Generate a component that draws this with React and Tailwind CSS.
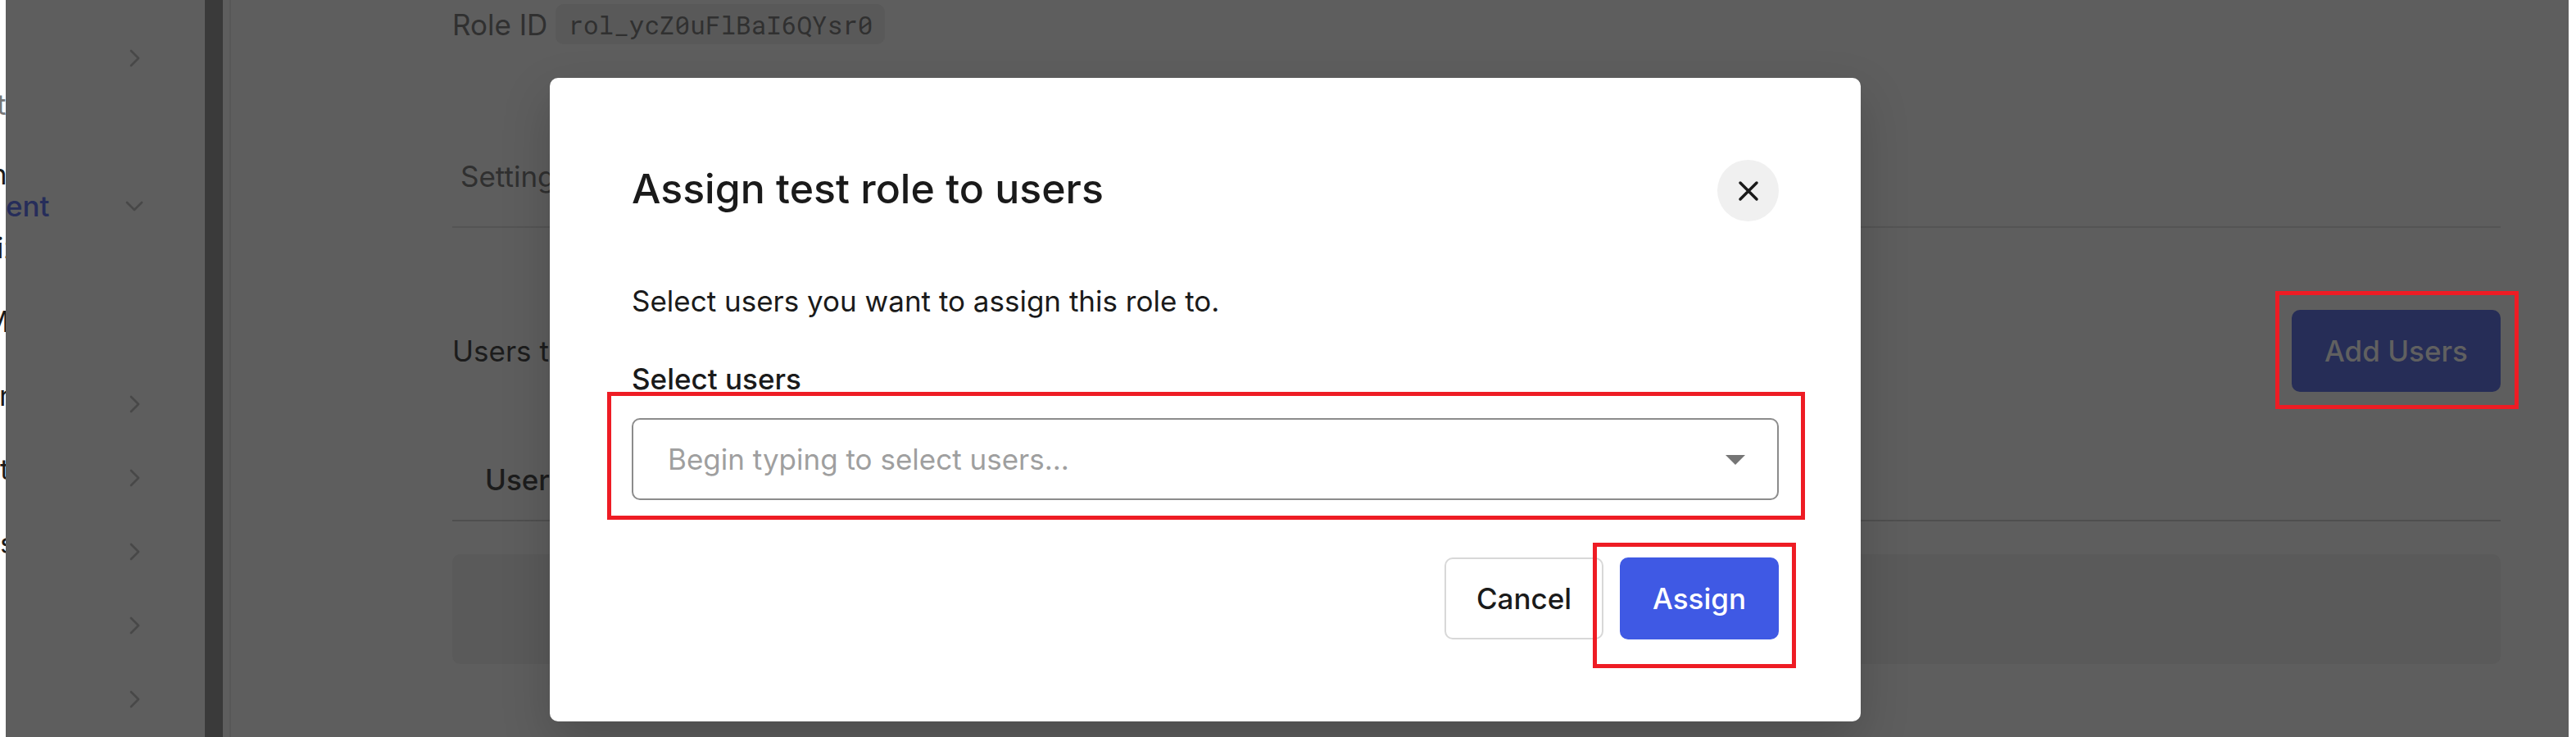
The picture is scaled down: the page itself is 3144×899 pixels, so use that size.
import React, { useState } from 'react';

const edgeRows = [
  { text: 't', className: 'h-20 -ml-1 text-[#777777]' },
  { text: 'n', className: 'h-[90px] -ml-3' },
  { text: 'iz', className: 'h-[90px] -ml-1' },
  { text: 'M', className: 'h-[90px] -ml-5' },
  { text: 'r', className: 'h-[90px] -ml-px' },
  { text: 't', className: 'h-[90px]' },
  { text: 's', className: 'h-[90px]' },
];

function Chevron({ open }) {
  return (
    <svg viewBox="0 0 24 24" className="h-6 w-6" fill="none" stroke="#484848" strokeWidth="2.6" strokeLinecap="round" strokeLinejoin="round">
      {open ? <path d="M3 8l9 9 9-9" /> : <path d="M8 3l9 9-9 9" />}
    </svg>
  );
}

function NavRow({ label, open }) {
  return (
    <button type="button" aria-label={label || 'Expand section'} className="flex h-[90px] w-full shrink-0 items-center justify-between pr-[74px]">
      <span className="font-medium text-[#262d5a]">{label}</span>
      <Chevron open={open} />
    </button>
  );
}

function Highlight({ className }) {
  return <span aria-hidden="true" className={`pointer-events-none absolute border-[5px] border-[#ee1c24] ${className}`} />;
}

function Sidebar() {
  return (
    <nav className="flex w-[243px] shrink-0 flex-col pt-[26px]">
      <NavRow />
      <div className="h-[90px] shrink-0" />
      <NavRow label="ent" open />
      <div className="h-[152px] shrink-0" />
      {[0, 1, 2, 3, 4].map((i) => (
        <NavRow key={i} />
      ))}
    </nav>
  );
}

function RolePage() {
  return (
    <main className="flex min-w-0 flex-1 flex-col pl-[270px] pr-[83px] pt-[5px]">
      <div className="flex h-[49px] shrink-0 items-center gap-2.5 text-[#303030]">
        <span>Role ID</span>
        <code className="flex h-[49px] items-center rounded-[10px] bg-[#595959] px-[15px] font-['Roboto_Mono','DejaVu_Sans_Mono',monospace] text-[31px]">rol_ycZ0uFlBaI6QYsr0</code>
      </div>

      <div className="mt-[99px] flex h-[125px] shrink-0 items-center border-b-2 border-[#545454] px-[10px]">
        <a href="#settings" className="text-[#303030]">Settings</a>
      </div>

      <div className="mt-[100px] flex h-[100px] shrink-0 items-center justify-between">
        <p className="text-[#1c1c1c]">Users t</p>
        <div className="relative">
          <button type="button" className="h-[100px] w-[255px] rounded-[10px] bg-[#262d57] font-medium text-[#606060]">Add Users</button>
          <Highlight className="-bottom-[21px] -left-5 -right-[22px] -top-[23px]" />
        </div>
      </div>

      <table className="mt-[57px] w-full">
        <thead>
          <tr className="h-[100px] border-b-2 border-[#4f4f4f]">
            <th className="px-10 text-left font-medium text-[#1c1c1c]">User</th>
          </tr>
        </thead>
      </table>
      <div className="mt-10 h-[134px] shrink-0 rounded-[10px] bg-[#5a5a5a]" />
    </main>
  );
}

function AssignDialog() {
  const [query, setQuery] = useState('');

  return (
    <div className="absolute inset-0 flex items-start justify-center pr-[202px] pt-[95px]">
      <section role="dialog" aria-labelledby="dialog-title" className="w-full max-w-[1600px] rounded-[10px] bg-white p-[100px] text-[#1a1a1a] shadow-[0_24px_60px_rgba(0,0,0,0.18)]">
        <header className="flex h-[75px] items-start justify-between">
          <h2 id="dialog-title" className="text-[50px] font-medium leading-[70px]">Assign test role to users</h2>
          <button type="button" aria-label="Close" className="grid h-[75px] w-[75px] place-items-center rounded-full bg-[#f0f0f0]">
            <svg viewBox="0 0 24 24" className="h-6 w-6 overflow-visible" fill="none" stroke="#1a1a1a" strokeWidth="3.5" strokeLinecap="round">
              <path d="M2 2l20 20M22 2L2 22" />
            </svg>
          </button>
        </header>

        <p className="mt-[72px] leading-[50px]">Select users you want to assign this role to.</p>

        <label htmlFor="users" className="mt-[45px] block font-medium leading-[50px]">Select users</label>
        <div className="relative mt-[23px]">
          <input
            id="users"
            value={query}
            onChange={(e) => setQuery(e.target.value)}
            placeholder="Begin typing to select users..."
            className="block h-[100px] w-full rounded-[10px] border-2 border-[#8c8c8c] px-[42px] placeholder:text-[#9f9f9f]"
          />
          <svg viewBox="0 0 24 12" className="absolute right-[41px] top-[45px] h-3 w-6" fill="#757575">
            <path d="M0 0h24L12 12z" />
          </svg>
          <Highlight className="-bottom-6 -left-[30px] -right-8 -top-8" />
        </div>

        <footer className="mt-[70px] flex justify-end gap-5">
          <button type="button" className="h-[100px] w-[194px] rounded-[10px] border-2 border-[#d8d8d8] font-medium">Cancel</button>
          <div className="relative">
            <button type="button" className="h-[100px] w-[194px] rounded-[10px] bg-[#3f59e4] font-medium text-white">Assign</button>
            <Highlight className="-bottom-[35px] -left-[33px] -right-[21px] -top-[18px]" />
          </div>
        </footer>
      </section>
    </div>
  );
}

export default function App() {
  return (
    <div className="relative flex h-screen w-full overflow-hidden bg-white pr-[9px] font-['Inter',sans-serif] text-[35px] leading-[50px]">
      <div className="flex w-[7px] shrink-0 flex-col overflow-hidden pt-[87px] text-[#1a1a1a]">
        {edgeRows.map((row, i) => (
          <span key={i} className={`flex shrink-0 items-center ${row.className}`}>{row.text}</span>
        ))}
      </div>
      <div className="flex min-w-0 flex-1 bg-[#5e5e5e]">
        <Sidebar />
        <div className="w-[22px] shrink-0 bg-[#3a3a3a]" />
        <div className="w-[10px] shrink-0 border-r-2 border-[#575757]" />
        <RolePage />
      </div>
      <AssignDialog />
    </div>
  );
}
